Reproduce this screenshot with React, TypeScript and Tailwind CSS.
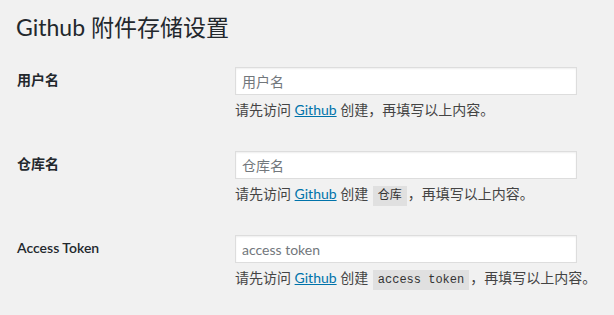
const sans = "font-['Lato','Noto_Sans_CJK_SC',sans-serif]"

type Row = {
  label: string
  placeholder: string
  code?: string
}

const rows: Row[] = [
  { label: "用户名", placeholder: "用户名" },
  { label: "仓库名", placeholder: "仓库名", code: "仓库" },
  { label: "Access Token", placeholder: "access token", code: "access token" },
]

function SettingRow({ row }: { row: Row }) {
  return (
    <div className="flex h-[84px]">
      <label className="w-[219px] shrink-0 pl-[1px] pt-[3px] text-[14px] leading-[20px] font-semibold text-[#23282d]">
        {row.label}
      </label>
      <div className="flex flex-col">
        <input
          type="text"
          placeholder={row.placeholder}
          className={`${sans} h-[28px] w-[342px] border border-[#ddd] bg-white px-[6px] text-[14px] text-[#32373c] shadow-[inset_0_1px_2px_rgba(0,0,0,0.07)] outline-none placeholder:text-[#72777c]`}
        />
        <p className="mt-[5px] text-[14px] leading-[20px] text-[#444]">
          请先访问{" "}
          <a href="#" className="text-[#0073aa] underline">
            Github
          </a>{" "}
          创建
          {row.code ? (
            <>
              {" "}
              <code className="mx-[1px] inline-block h-[20px] bg-[rgba(0,0,0,0.07)] px-[5px] font-['Liberation_Mono','Noto_Sans_CJK_SC',monospace] text-[12px] leading-[20px] text-[#333]">
                {row.code}
              </code>
            </>
          ) : null}
          ，再填写以上内容。
        </p>
      </div>
    </div>
  )
}

export default function App() {
  return (
    <div className={`${sans} min-h-[315px] w-full bg-[#f1f1f1] pl-[16px]`}>
      <h1 className="pt-[12px] text-[23px] leading-[30px] font-normal text-[#23282d]">Github 附件存储设置</h1>
      <div className="mt-[25px]">
        {rows.map((row) => (
          <SettingRow key={row.label} row={row} />
        ))}
      </div>
    </div>
  )
}
